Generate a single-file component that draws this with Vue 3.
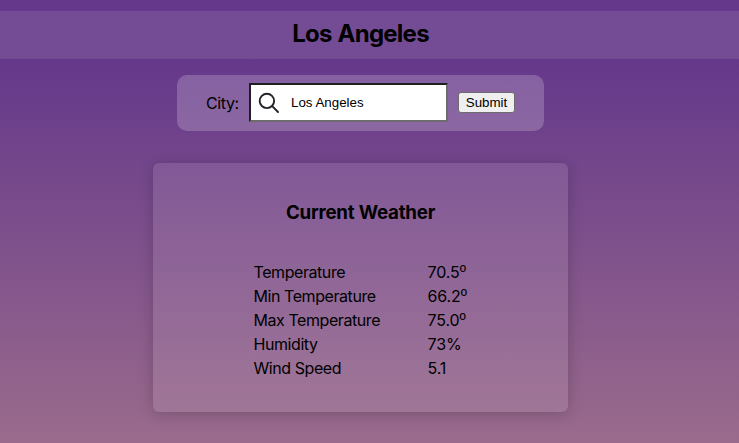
<script setup>
import { ref } from 'vue'

const city = ref('Los Angeles')
const rows = [
  { label: 'Temperature', value: '70.5', unit: 'º' },
  { label: 'Min Temperature', value: '66.2', unit: 'º' },
  { label: 'Max Temperature', value: '75.0', unit: 'º' },
  { label: 'Humidity', value: '73%' },
  { label: 'Wind Speed', value: '5.1' },
]
</script>

<template>
  <div class="page">
    <header class="header"><h1>Los Angeles</h1></header>
    <main class="content">
      <form class="search" @submit.prevent>
        <label for="city">City:</label>
        <div class="field">
          <svg class="glass" viewBox="0 0 22 22" width="22" height="22">
            <circle cx="8.9" cy="8.9" r="7.2" />
            <path d="M14.2 14.2 L20 20" />
          </svg>
          <input id="city" v-model="city" type="text" />
        </div>
        <button type="submit">Submit</button>
      </form>
      <section class="card">
        <h2>Current Weather</h2>
        <div class="table">
          <div v-for="row in rows" :key="row.label" class="row">
            <span>{{ row.label }}</span>
            <span class="value">{{ row.value }}<span v-if="row.unit" class="unit">{{ row.unit }}</span></span>
          </div>
        </div>
      </section>
    </main>
  </div>
</template>

<style>
body {
  margin: 0;
  overflow: hidden;
}
</style>

<style scoped>
.page {
  box-sizing: border-box;
  height: 443px;
  padding-top: 11px;
  font-family: Inter, 'Liberation Sans', sans-serif;
  font-size: 16px;
  color: #000;
  background: linear-gradient(#65388b 0, #65388b 60px, #9a6b8c 443px);
}
.header {
  height: 48px;
  padding-right: 18px;
  display: flex;
  justify-content: center;
  background: rgba(255, 255, 255, 0.1);
}
h1 {
  margin: 0;
  font-size: 24px;
  line-height: 46px;
  font-weight: 700;
  letter-spacing: -0.75px;
  word-spacing: 1px;
}
.content {
  display: flex;
  flex-direction: column;
  align-items: center;
  padding: 16px 18px 0 0;
}
.search {
  box-sizing: border-box;
  width: 367px;
  height: 56px;
  padding: 0 0 1px 29px;
  display: flex;
  align-items: center;
  border-radius: 10px;
  background: rgba(255, 255, 255, 0.2);
}
label {
  width: 43px;
  padding-top: 1px;
  letter-spacing: -0.4px;
}
.field {
  box-sizing: border-box;
  width: 199px;
  height: 39px;
  margin-right: 10px;
  padding-left: 7px;
  display: flex;
  align-items: center;
  background: #fff;
  border: 2px solid;
  border-color: #1f1f21 #6c6c6c #6c6c6c #1f1f21;
}
.glass {
  flex: none;
  fill: none;
  stroke: #212529;
  stroke-width: 1.9;
  stroke-linecap: round;
}
input {
  width: 150px;
  margin-left: 11px;
  padding: 0;
  border: 0;
  outline: 0;
  background: none;
  font: 13.33px 'Liberation Sans', Arial, sans-serif;
}
button {
  box-sizing: border-box;
  width: 57px;
  height: 21px;
  padding: 0;
  border: 1px solid #6c6c6c;
  border-radius: 3px;
  background: #efefef;
  color: #000;
  font: 13.33px 'Liberation Sans', Arial, sans-serif;
}
.card {
  box-sizing: border-box;
  width: 415px;
  height: 249px;
  margin-top: 32px;
  padding-top: 38px;
  display: flex;
  flex-direction: column;
  align-items: center;
  border-radius: 6px;
  background: rgba(255, 255, 255, 0.1);
  box-shadow: 0 2px 15px rgba(0, 0, 0, 0.2);
}
h2 {
  margin: 0 0 36px;
  font-size: 18.72px;
  line-height: 23px;
  font-weight: 700;
  letter-spacing: -0.22px;
}
.table {
  width: 214px;
}
.row {
  display: grid;
  grid-template-columns: 174px 40px;
  line-height: 24px;
  white-space: nowrap;
  letter-spacing: -0.43px;
}
.value {
  letter-spacing: -0.1px;
}
.unit {
  font-family: 'Liberation Sans', sans-serif;
  font-size: 17px;
  line-height: 1;
}
</style>
